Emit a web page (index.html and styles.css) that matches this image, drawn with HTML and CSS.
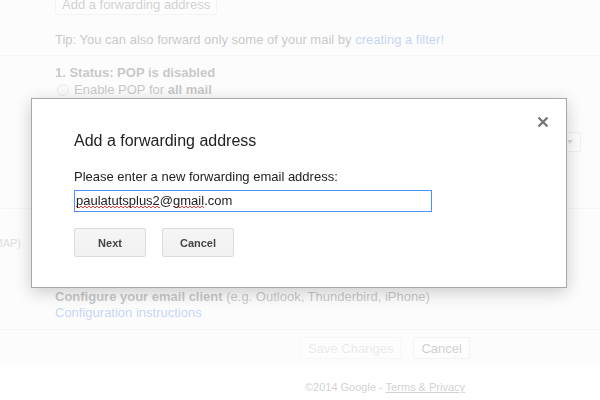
FILE: index.html
```html
<!DOCTYPE html>
<html lang="en">
<head>
<meta charset="utf-8">
<title>Forwarding and POP/IMAP</title>
<link rel="stylesheet" href="styles.css">
</head>
<body>
<div class="page">
  <div class="settings">
    <section class="row row-fwd">
      <div class="label"><b>Forwarding:</b></div>
      <div class="content">
        <button class="btn">Add a forwarding address</button>
        <p class="tip">Tip: You can also forward only some of your mail by <a href="#">creating a filter!</a></p>
      </div>
    </section>
    <section class="row row-pop">
      <div class="label"><b>POP Download:</b></div>
      <div class="content">
        <div class="line"><b>1. Status: POP is disabled</b></div>
        <div class="line"><span class="radio"></span>Enable POP for <b>all mail</b></div>
        <div class="line"><span class="radio"></span>Enable POP for <b>mail that arrives from now on</b></div>
        <div class="line"><span class="radio"></span>Disable POP</div>
        <div class="when"><b>2. When messages are accessed with POP</b><span class="select">keep Gmail's copy in the Inbox<i class="arrow"></i></span></div>
        <div class="config config-pop"><b>3. Configure your email client</b> (e.g. Outlook, Eudora, Netscape Mail)<br><a href="#">Configuration instructions</a></div>
      </div>
    </section>
    <section class="row row-imap">
      <div class="label"><b>IMAP Access:</b><div class="note"><span>(access Gmail from other clients using IMAP)</span></div></div>
      <div class="content">
        <div class="line"><b>Status: IMAP is disabled</b></div>
        <div class="line"><span class="radio"></span>Enable IMAP</div>
        <div class="line"><span class="radio"></span>Disable IMAP</div>
        <div class="config config-imap"><b>Configure your email client</b> (e.g. Outlook, Thunderbird, iPhone)<br><a href="#">Configuration instructions</a></div>
      </div>
    </section>
    <div class="actions">
      <button class="btn btn-disabled">Save Changes</button>
      <button class="btn">Cancel</button>
    </div>
  </div>
  <footer class="footer">©2014 Google - <a href="#">Terms &amp; Privacy</a></footer>
</div>

<div class="overlay"></div>

<div class="dialog" role="dialog">
  <span class="close" aria-label="Close">
    <svg width="12" height="12" viewBox="0 0 12 12"><path d="M1.5 1.5 L10.5 10.5 M10.5 1.5 L1.5 10.5" stroke="#777" stroke-width="2.3" fill="none"/></svg>
  </span>
  <h2 class="dlg-title">Add a forwarding address</h2>
  <p class="dlg-label">Please enter a new forwarding email address:</p>
  <div class="input" role="textbox"><span class="sp">paulatutsplus2</span>@<span class="sp">gmail</span>.com</div>
  <div class="dlg-buttons">
    <button class="kbtn">Next</button>
    <button class="kbtn">Cancel</button>
  </div>
</div>
</body>
</html>
```

FILE: styles.css
```css
html, body {
  margin: 0;
  padding: 0;
  width: 600px;
  height: 400px;
  overflow: hidden;
  background: #fff;
}

body {
  font-family: "Liberation Sans", Arial, sans-serif;
  font-size: 13px;
  color: #222;
}

a { color: #15c; text-decoration: none; }

/* ---------- background page (scrolled) ---------- */
.page {
  width: 1086px;
  margin-left: -158px;
}

.settings {
  margin-top: -7px;
  background: #f3f3f3;
}

.row {
  display: grid;
  grid-template-columns: 180px 1fr;
  column-gap: 33px;
  border-bottom: 1px solid #dadada;
  line-height: 17px;
}

.label {
  padding-right: 1px;
  padding-top: 8px;
}

.row-fwd .label { padding-top: 0; }

.note {
  display: flex;
  justify-content: flex-end;
  white-space: nowrap;
  font-size: 11px;
  line-height: 14px;
  color: #777;
  margin-top: 2px;
}

.content { padding: 8px 0 14px; }

.row-fwd .content { padding: 0 0 7px; }
.row-imap .content { padding-bottom: 8px; }

.btn {
  font-family: "Liberation Sans", Arial, sans-serif;
  font-size: 13px;
  color: #444;
  height: 22px;
  padding: 0 6px;
  border: 1px solid #d0d0d0;
  border-radius: 2px;
  background: #f5f5f5;
  display: block;
}

.tip {
  margin: 16px 0 0;
  color: #222;
}

.line { white-space: nowrap; }

.radio {
  display: inline-block;
  vertical-align: -2px;
  width: 10px;
  height: 10px;
  border: 1px solid #aaa;
  border-radius: 50%;
  background: #ececec;
  margin: 0 5px 0 2px;
}

.when {
  display: flex;
  align-items: center;
  width: 526px;
  height: 20px;
  white-space: nowrap;
}

.select {
  margin-left: auto;
  box-sizing: border-box;
  height: 20px;
  line-height: 18px;
  padding: 0 22px 0 8px;
  border: 1px solid #c8c8c8;
  border-radius: 2px;
  background: #f8f8f8;
  position: relative;
  color: #444;
}

.arrow {
  position: absolute;
  right: 7px;
  top: 7px;
  width: 0;
  height: 0;
  border-left: 3px solid transparent;
  border-right: 3px solid transparent;
  border-top: 4px solid #666;
}

.config-pop { margin-top: 8px; }

.config-imap {
  margin-top: 21px;
  line-height: 16px;
}

.actions {
  display: flex;
  justify-content: center;
  gap: 12px;
  padding: 7px 0 6px;
}

.actions .btn { padding: 0 7px; }

.btn-disabled { color: #aaa; border-color: #ddd; }

.footer {
  background: #fff;
  text-align: center;
  font-size: 11px;
  line-height: 14px;
  padding-top: 15px;
  color: #444;
}

.footer a { color: #444; text-decoration: underline; }

/* ---------- modal ---------- */
.overlay {
  position: fixed;
  inset: 0;
  background: rgba(255, 255, 255, 0.75);
  z-index: 1;
}

.dialog {
  position: absolute;
  left: 31px;
  top: 98px;
  width: 536px;
  box-sizing: border-box;
  padding: 30px 42px;
  background: #fff;
  border: 1px solid #a8a8a8;
  box-shadow: 0 4px 16px rgba(0, 0, 0, 0.2);
  z-index: 2;
}

.close {
  position: absolute;
  top: 17px;
  right: 17px;
  width: 12px;
  height: 12px;
  display: block;
}

.close svg { display: block; }

.dlg-title {
  margin: 0;
  font-size: 16px;
  font-weight: normal;
  line-height: 24px;
  color: #222;
}

.dlg-label {
  margin: 16px 0 5px;
  line-height: 16px;
  color: #222;
}

.input {
  box-sizing: border-box;
  width: 358px;
  height: 22px;
  line-height: 20px;
  padding: 0 1px;
  border: 1px solid #4d90fe;
  color: #222;
  white-space: nowrap;
}

.sp {
  background-image:
    linear-gradient(90deg, #e04040 50%, transparent 50%),
    linear-gradient(90deg, transparent 50%, #e04040 50%);
  background-size: 4px 1px, 4px 1px;
  background-position: 0 calc(100% - 1px), 0 100%;
  background-repeat: repeat-x;
}

.dlg-buttons {
  display: flex;
  gap: 16px;
  margin-top: 16px;
}

.kbtn {
  box-sizing: border-box;
  min-width: 72px;
  height: 29px;
  padding: 0 8px;
  font-family: "Liberation Sans", Arial, sans-serif;
  font-size: 11px;
  font-weight: bold;
  color: #444;
  background: linear-gradient(#f5f5f5, #f1f1f1);
  border: 1px solid #dcdcdc;
  border-radius: 2px;
}
```
